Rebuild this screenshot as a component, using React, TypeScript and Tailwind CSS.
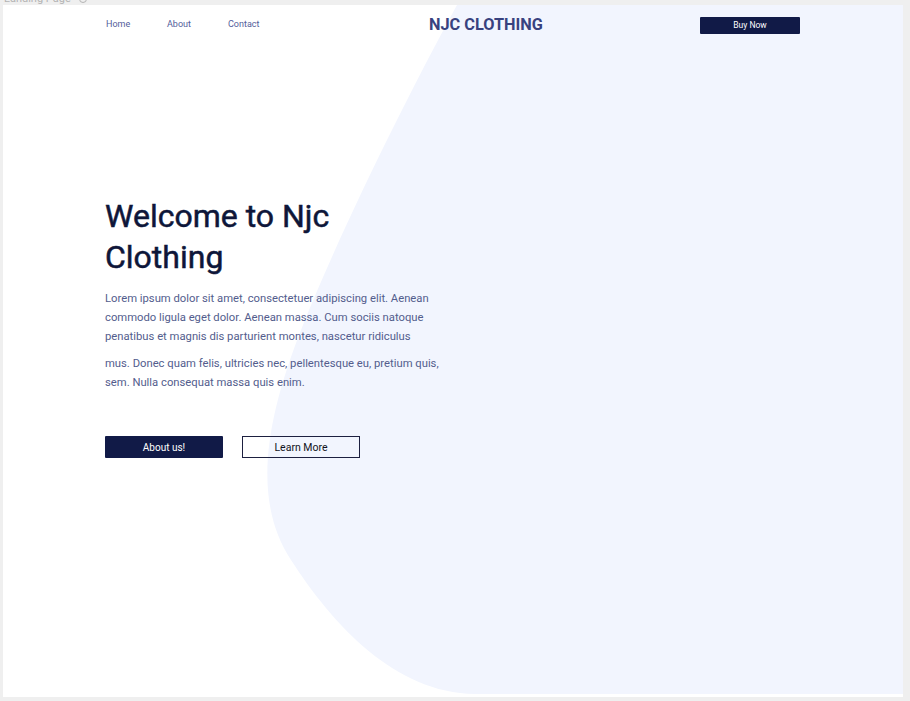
import React from "react";

const navLinks = ["Home", "About", "Contact"];

const Blob: React.FC = () => (
    <svg className="absolute inset-0" width="900" height="692" viewBox="0 0 900 692" fill="none">
        <path
            d="M454 0 C410 80 340 220 300 320 C258 425 252 500 288 555 C330 620 392 688 472 689 L900 689 L900 0 Z"
            fill="#f2f5fe"
        />
    </svg>
);

const App: React.FC = () => {
    return (
        <div className="relative w-[910px] h-[701px] overflow-hidden bg-[#efefef] font-['Roboto',sans-serif]">
            <div className="absolute left-[4px] top-[-9px] flex items-center gap-2 text-[11px] text-[#b4b4b4]">
                <span>Landing Page</span>
                <span className="w-[8px] h-[8px] rounded-full border border-[#b4b4b4]"></span>
            </div>
            <div className="relative ml-[3px] mt-[5px] w-[900px] h-[692px] bg-white overflow-hidden">
                <Blob />
                <div className="relative">
                    <nav className="flex items-center h-[39px] pt-[1px] pl-[103px]">
                        <div className="flex w-[323px]">
                            {navLinks.map((l) => (
                                <a key={l} href="#" className="w-[61px] text-[9px] text-[#535d9a]">
                                    {l}
                                </a>
                            ))}
                        </div>
                        <div className="w-[271px] text-[16.3px] font-bold text-[#38427f]">NJC CLOTHING</div>
                        <button className="w-[100px] h-[17px] rounded-[1px] bg-[#111a47] text-[8.5px] text-white">Buy Now</button>
                    </nav>

                    <section className="pl-[102px] pt-[152px]">
                        <h1 className="text-[32px] leading-[41px] font-normal [-webkit-text-stroke:0.5px_#0e1639] text-[#0e1639]">
                            Welcome to Njc
                            <br />
                            Clothing
                        </h1>
                        <p className="mt-[11px] text-[11.25px] leading-[19px] text-[#535d8d] whitespace-nowrap">
                            Lorem ipsum dolor sit amet, consectetuer adipiscing elit. Aenean
                            <br />
                            commodo ligula eget dolor. Aenean massa. Cum sociis natoque
                            <br />
                            penatibus et magnis dis parturient montes, nascetur ridiculus
                        </p>
                        <p className="mt-[8px] text-[11.25px] leading-[19px] text-[#535d8d] whitespace-nowrap">
                            mus. Donec quam felis, ultricies nec, pellentesque eu, pretium quis,
                            <br />
                            sem. Nulla consequat massa quis enim.
                        </p>
                        <div className="flex gap-[19px] mt-[44px]">
                            <button className="w-[118px] h-[22px] rounded-[1px] bg-[#111a47] text-[10px] text-white">About us!</button>
                            <button className="w-[118px] h-[22px] border-[1.5px] border-[#1d2040] bg-transparent text-[10.5px] text-[#111322] pt-[2px]">
                                Learn More
                            </button>
                        </div>
                    </section>
                </div>
            </div>
        </div>
    );
};

export default App;
